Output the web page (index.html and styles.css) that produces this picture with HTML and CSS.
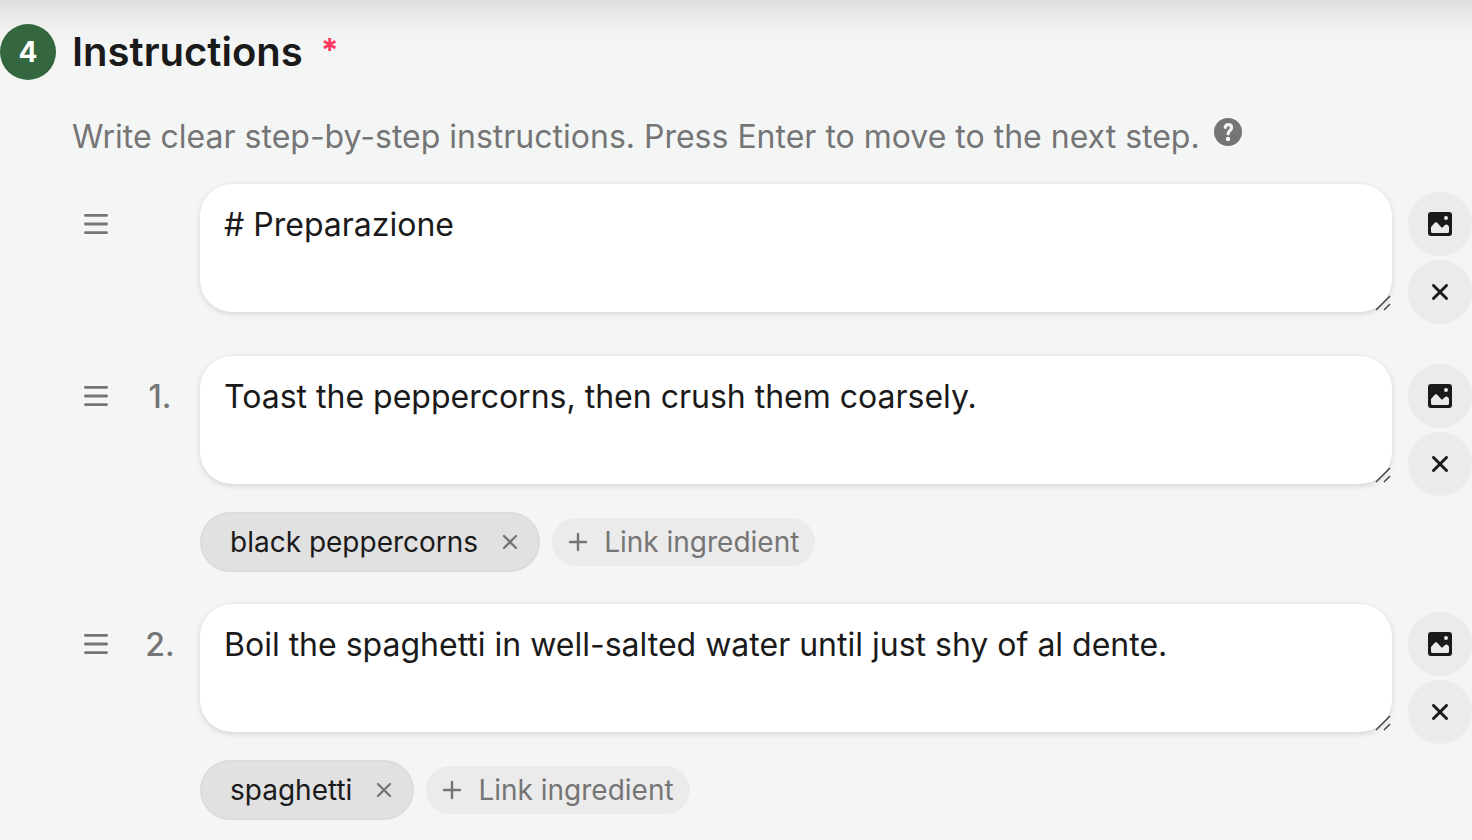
FILE: index.html
```html
<!DOCTYPE html>
<html lang="en">
<head>
  <meta charset="UTF-8">
  <meta name="viewport" content="width=device-width, initial-scale=1">
  <title>Recipe instructions</title>
  <link rel="stylesheet" href="styles.css">
</head>
<body>
  <!-- shared icons -->
  <svg class="sprite" aria-hidden="true">
    <symbol id="icon-drag" viewBox="0 0 24 24">
      <path d="M1.4 3.400h21.200M1.400 12h21.200M1.400 20.600h21.200" fill="none" stroke="currentColor" stroke-width="2.800" stroke-linecap="round"/>
    </symbol>
    <symbol id="icon-image" viewBox="0 0 24 24">
      <path fill="currentColor" fill-rule="evenodd" d="M3 0h18a3 3 0 0 1 3 3v18a3 3 0 0 1-3 3H3a3 3 0 0 1-3-3V3a3 3 0 0 1 3-3zM18 4a2 2 0 1 0 0 4a2 2 0 0 0 0-4zM3 15V19.500Q3 21 4.500 21H19.500Q21 21 21 19.500V14.500L19.300 12.800Q18.300 12 17.300 12.800L14.700 15.200Q14 15.800 13.300 15.200L9 10.600Q8 9.700 7 10.600z"/>
    </symbol>
    <symbol id="icon-close" viewBox="0 0 16 16">
      <path d="M1.500 1.500l13 13M14.500 1.500l-13 13" fill="none" stroke="currentColor" stroke-width="2.900" stroke-linecap="round"/>
    </symbol>
    <symbol id="icon-remove" viewBox="0 0 16 16">
      <path d="M2 2l12 12M14 2L2 14" fill="none" stroke="currentColor" stroke-width="2.300" stroke-linecap="round"/>
    </symbol>
    <symbol id="icon-plus" viewBox="0 0 20 20">
      <path d="M10 2v16M2 10h16" fill="none" stroke="currentColor" stroke-width="2.400" stroke-linecap="round"/>
    </symbol>
    <symbol id="icon-grip" viewBox="0 0 16 16">
      <path d="M1 15L15 1M9 15l6-6" fill="none" stroke="currentColor" stroke-width="1.500"/>
    </symbol>
  </svg>

  <section class="instructions">
    <header class="section-header">
      <span class="section-number">4</span>
      <h2>Instructions <span class="required">*</span></h2>
    </header>

    <div class="section-body">
      <p class="description">
        Write clear step-by-step instructions. Press Enter to move to the next step.
        <button type="button" class="help" aria-label="Help">
          <svg viewBox="0 0 28 28">
            <circle cx="14" cy="14" r="14" fill="currentColor"/>
            <path d="M11.200 9.300C11.700 7.300 12.900 6.700 14.400 6.700C16.300 6.700 17.500 8 17.500 9.700C17.500 12.500 14.200 12.700 14.200 15.700" fill="none" stroke="#f4f6f5" stroke-width="3.200" stroke-linecap="round"/>
            <circle cx="14" cy="21" r="2.200" fill="#f4f6f5"/>
          </svg>
        </button>
      </p>

      <ol class="steps">
        <li class="step">
          <button type="button" class="drag" aria-label="Reorder"><svg><use href="#icon-drag"/></svg></button>
          <span class="step-number"></span>
          <div class="field">
            <textarea aria-label="Section heading"># Preparazione</textarea>
            <svg class="grip"><use href="#icon-grip"/></svg>
          </div>
          <div class="actions">
            <button type="button" aria-label="Add image"><svg class="image"><use href="#icon-image"/></svg></button>
            <button type="button" aria-label="Remove step"><svg class="close"><use href="#icon-close"/></svg></button>
          </div>
        </li>

        <li class="step">
          <button type="button" class="drag" aria-label="Reorder"><svg><use href="#icon-drag"/></svg></button>
          <label class="step-number" for="step-1">1.</label>
          <div class="field">
            <textarea id="step-1">Toast the peppercorns, then crush them coarsely.</textarea>
            <svg class="grip"><use href="#icon-grip"/></svg>
          </div>
          <div class="actions">
            <button type="button" aria-label="Add image"><svg class="image"><use href="#icon-image"/></svg></button>
            <button type="button" aria-label="Remove step"><svg class="close"><use href="#icon-close"/></svg></button>
          </div>
          <div class="ingredients">
            <span class="chip">black peppercorns <button type="button" aria-label="Unlink black peppercorns"><svg><use href="#icon-remove"/></svg></button></span>
            <button type="button" class="link-ingredient"><svg><use href="#icon-plus"/></svg>Link ingredient</button>
          </div>
        </li>

        <li class="step">
          <button type="button" class="drag" aria-label="Reorder"><svg><use href="#icon-drag"/></svg></button>
          <label class="step-number" for="step-2">2.</label>
          <div class="field">
            <textarea id="step-2">Boil the spaghetti in well-salted water until just shy of al dente.</textarea>
            <svg class="grip"><use href="#icon-grip"/></svg>
          </div>
          <div class="actions">
            <button type="button" aria-label="Add image"><svg class="image"><use href="#icon-image"/></svg></button>
            <button type="button" aria-label="Remove step"><svg class="close"><use href="#icon-close"/></svg></button>
          </div>
          <div class="ingredients">
            <span class="chip">spaghetti <button type="button" aria-label="Unlink spaghetti"><svg><use href="#icon-remove"/></svg></button></span>
            <button type="button" class="link-ingredient"><svg><use href="#icon-plus"/></svg>Link ingredient</button>
          </div>
        </li>
      </ol>
    </div>
  </section>
</body>
</html>
```
FILE: styles.css
```css
* {
  margin: 0;
  padding: 0;
  box-sizing: border-box;
}

body {
  font-family: Inter, "Liberation Sans", sans-serif;
  font-size: 32px;
  line-height: 50px;
  color: #1a1a1a;
  background: #f4f6f5 linear-gradient(#dcdedd, #e8eae9 14px, #f0f2f1 28px, #f4f6f5 48px) no-repeat;
}

button {
  border: none;
  background: none;
  font: inherit;
  color: inherit;
  cursor: pointer;
}

svg {
  display: block;
}

.sprite {
  display: none;
}

.instructions {
  padding: 24px 0 20px;
}

.section-header {
  display: flex;
  align-items: center;
  gap: 16px;
}

.section-number {
  width: 56px;
  height: 56px;
  border-radius: 50%;
  background: #34673f;
  color: #fff;
  font-size: 28px;
  font-weight: 700;
  line-height: 56px;
  text-align: center;
}

h2 {
  font-size: 40px;
  font-weight: 600;
  line-height: 56px;
}

.required {
  margin-left: 8px;
  font-size: 32px;
  font-weight: 700;
  line-height: 32px;
  vertical-align: 4px;
  color: #ff3860;
}

.section-body {
  padding-left: 72px;
}

.description {
  display: flex;
  gap: 14px;
  margin: 32px 0 22px;
  color: #757575;
}

.help {
  align-self: flex-start;
  padding-top: 6px;
}

.help svg {
  width: 28px;
  height: 28px;
}

.steps {
  display: grid;
  gap: 32px;
  list-style: none;
}

.step {
  display: grid;
  grid-template-columns: 48px 80px 1fr 80px;
  align-items: start;
}

.drag {
  display: grid;
  place-items: center;
  height: 80px;
  color: #757575;
}

.drag svg {
  width: 24px;
  height: 24px;
}

.step-number {
  line-height: 82px;
  font-weight: 500;
  text-align: center;
  color: #757575;
}

.field {
  position: relative;
}

textarea {
  display: block;
  width: 100%;
  height: 128px;
  padding: 16px 24px;
  border: none;
  border-radius: 32px;
  outline: none;
  resize: vertical;
  background: #fff;
  box-shadow: 0 2px 6px rgba(0, 0, 0, 0.12), 0 0 2px rgba(0, 0, 0, 0.06);
  font: inherit;
  color: inherit;
}

textarea::-webkit-resizer {
  background: transparent;
}

/* resize handle drawn over the rounded corner */
.grip {
  position: absolute;
  right: 1px;
  bottom: 1px;
  width: 16px;
  height: 16px;
  color: #444;
  pointer-events: none;
}

.actions {
  display: grid;
  gap: 4px;
  justify-content: end;
  padding-top: 8px;
}

.actions button {
  display: grid;
  place-items: center;
  width: 64px;
  height: 64px;
  border-radius: 50%;
  background: #ebebeb;
}

.image {
  width: 24px;
  height: 24px;
}

.close {
  width: 16px;
  height: 16px;
}

.ingredients {
  grid-column: 3 / -1;
  display: flex;
  flex-wrap: wrap;
  align-items: center;
  gap: 12px;
  margin-top: 16px;
  font-size: 28px;
}

.chip {
  display: flex;
  align-items: center;
  gap: 24px;
  height: 60px;
  padding: 0 20px 0 28px;
  border: 2px solid #dcdcdc;
  border-radius: 30px;
  background: #e1e1e1;
}

.chip button {
  color: #757575;
}

.chip svg {
  width: 16px;
  height: 16px;
}

.link-ingredient {
  display: flex;
  align-items: center;
  gap: 16px;
  height: 48px;
  padding: 0 16px;
  border-radius: 24px;
  background: #ebebeb;
  color: #757575;
}

.link-ingredient svg {
  width: 20px;
  height: 20px;
}
```
